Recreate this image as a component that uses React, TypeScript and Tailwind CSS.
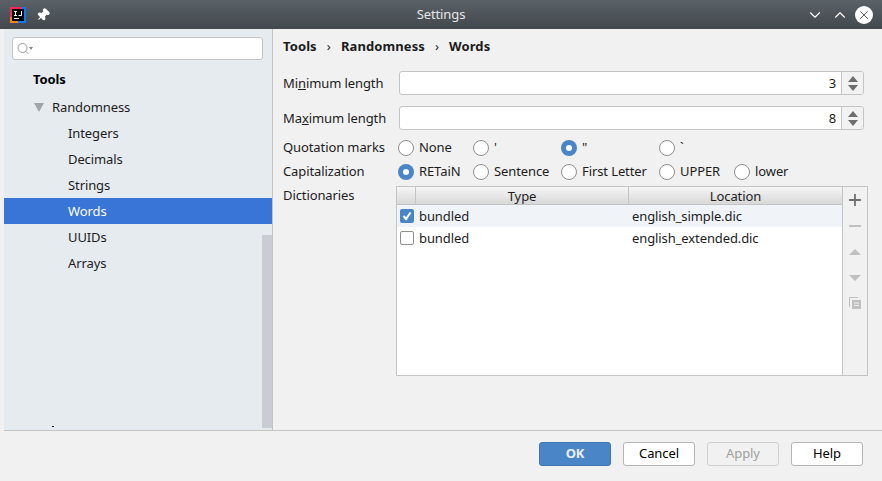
import React from "react";
import { ChevronDown, ChevronUp, X, Pin, Plus, Minus } from "lucide-react";

const Radio = ({ label, checked, width }: { label: string; checked?: boolean; width: string }) => (
  <div className={`flex items-center gap-[5px] ${width}`}>
    {checked ? (
      <span className="flex h-[16px] w-[16px] items-center justify-center rounded-full bg-[#4a86c7]">
        <span className="h-[6px] w-[6px] rounded-full bg-white" />
      </span>
    ) : (
      <span className="h-[16px] w-[16px] rounded-full border border-[#8f8f8f] bg-white" />
    )}
    <span>{label}</span>
  </div>
);

const Spinner = ({ value }: { value: string }) => (
  <div className="flex h-[24px] w-[465px] rounded-[3px] border border-[#c4c4c4] bg-white">
    <div className="flex-1 pr-[5px] text-right leading-[23px]">{value}</div>
    <div className="flex w-[22px] flex-col items-center justify-center gap-[3px] border-l border-[#c4c4c4] bg-[#f2f2f2] rounded-r-[3px]">
      <span className="h-0 w-0 border-x-[5px] border-b-[6px] border-x-transparent border-b-[#6e6e6e]" />
      <span className="h-0 w-0 border-x-[5px] border-t-[6px] border-x-transparent border-t-[#6e6e6e]" />
    </div>
  </div>
);

const Btn = ({ label, className }: { label: string; className: string }) => (
  <div className={`flex h-[24px] w-[72px] items-center justify-center rounded-[3px] border ${className}`}>{label}</div>
);

const TreeRow = ({ label, selected }: { label: string; selected?: boolean }) => (
  <div className={`h-[26px] pl-[64px] leading-[26px] ${selected ? "bg-[#3875d7] text-white" : ""}`}>{label}</div>
);

export default function App() {
  return (
    <div
      className="flex h-[481px] w-[882px] flex-col overflow-hidden bg-[#f1f1f1] text-[13px] tracking-[-0.1px] text-[#1c1c1c]"
      style={{ fontFamily: '"Noto Sans", sans-serif' }}
    >
      {/* Title bar */}
      <div className="flex h-[29px] shrink-0 items-center bg-gradient-to-b from-[#5a6167] to-[#42484d] px-[10px] text-white">
        <svg width="16" height="16" viewBox="0 0 16 16" className="shrink-0">
          <rect width="16" height="16" fill="#087cfa" />
          <path d="M0 0h12v2H2v8H0z" fill="#fe2857" />
          <path d="M0 10h2v4h6v2H0z" fill="#fc801d" />
          <rect x="2" y="2" width="12" height="12" fill="#000" />
          <rect x="4" y="11" width="5" height="1" fill="#fff" />
          <path d="M4 4h3v1H6v3h1v1H4V8h1V5H4zM11 4h1v4.5l-1 .5H8.5V8H11z" fill="#fff" />
        </svg>
        <Pin size={14} className="ml-[10px] rotate-45 fill-white text-white" />
        <div className="flex-1 pl-[26px] text-center text-[13px] text-[#e4e6e8]">Settings</div>
        <ChevronDown size={18} strokeWidth={1.5} className="mr-[6px] text-white" />
        <ChevronUp size={18} strokeWidth={1.5} className="mr-[5px] ml-[1px] text-white" />
        <div className="mr-[-1px] ml-[1px] flex h-[18px] w-[18px] items-center justify-center rounded-full bg-white">
          <X size={14} strokeWidth={1.5} className="text-[#42484d]" />
        </div>
      </div>

      {/* Body */}
      <div className="flex h-[401px] shrink-0 pl-[4px]">
        <aside className="relative w-[268px] shrink-0 bg-[#e6ebf0]">
          <div className="mx-[8px] mt-[8px] flex h-[23px] w-[251px] items-center rounded-[3px] border border-[#c4c4c4] bg-white pl-[4px]">
            <svg width="12" height="14" viewBox="0 0 12 14" fill="none" stroke="#9a9a9a" strokeWidth="1">
              <circle cx="5.5" cy="6" r="4.5" />
              <path d="M8.8 9.3l2.5 2.5" />
            </svg>
            <span className="h-0 w-0 border-x-[2px] border-t-[3px] border-x-transparent border-t-[#8a8a8a]" />
          </div>
          <div className="mt-[6px] h-[26px] pl-[29px] font-bold leading-[26px] text-black">Tools</div>
          <div className="mt-[2px] flex h-[26px] items-center gap-[8px] pl-[30px]">
            <span className="h-0 w-0 border-x-[5px] border-t-[9px] border-x-transparent border-t-[#a3a6a9]" />
            <span className="pt-[2px]">Randomness</span>
          </div>
          <TreeRow label="Integers" />
          <TreeRow label="Decimals" />
          <TreeRow label="Strings" />
          <TreeRow label="Words" selected />
          <TreeRow label="UUIDs" />
          <TreeRow label="Arrays" />
          <div className="absolute right-0 top-[206px] h-[193px] w-[10px] bg-[#c9ccd2]" />
          <div className="absolute left-[48px] top-[397px] h-[1px] w-[2px] bg-black" />
        </aside>

        {/* Content */}
        <main className="flex-1 border-l border-[#c4c4c4] pl-[10px] pr-[14px]">
          <div className="flex h-[33px] items-center gap-[10px] pt-[2px] font-bold tracking-[0.1px] text-[#1c1c1c]">
            <span>Tools</span>
            <span className="font-normal">›</span>
            <span>Randomness</span>
            <span className="font-normal">›</span>
            <span>Words</span>
          </div>
          <div className="mt-[9px] flex items-center">
            <div className="w-[116px] pt-[2px]">
              Mi<span className="underline">n</span>imum length
            </div>
            <Spinner value="3" />
          </div>
          <div className="mt-[11px] flex items-center">
            <div className="w-[116px] pt-[2px]">
              Ma<span className="underline">x</span>imum length
            </div>
            <Spinner value="8" />
          </div>
          <div className="mt-[9px] flex h-[18px] items-center">
            <div className="w-[115px]">Quotation marks</div>
            <Radio label="None" width="w-[75px]" />
            <Radio label="'" width="w-[88px]" />
            <Radio label={'"'} checked width="w-[98px]" />
            <Radio label="`" width="w-[60px]" />
          </div>
          <div className="mt-[6px] flex h-[18px] items-center">
            <div className="w-[115px]">Capitalization</div>
            <Radio label="RETaiN" checked width="w-[75px]" />
            <Radio label="Sentence" width="w-[88px]" />
            <Radio label="First Letter" width="w-[98px]" />
            <Radio label="UPPER" width="w-[75px]" />
            <Radio label="lower" width="w-[60px]" />
          </div>

          <div className="mt-[5px] flex">
            <div className="w-[113px]">Dictionaries</div>
            <div className="flex h-[190px] w-[472px] border border-[#c4c4c4]">
              <div className="flex-1 bg-white">
                <div className="flex h-[18px] border-b border-[#c4c4c4] bg-gradient-to-b from-[#f6f6f6] to-[#d8d8d8] text-center leading-[18px]">
                  <div className="w-[19px] border-r border-[#c4c4c4]" />
                  <div className="w-[213px] border-r border-[#c4c4c4]">Type</div>
                  <div className="flex-1">Location</div>
                </div>
                <div className="flex h-[22px] items-center bg-[#f0f4f9]">
                  <span className="ml-[3px] flex h-[14px] w-[14px] items-center justify-center rounded-[2px] bg-[#4a86c7]">
                    <svg width="10" height="10" viewBox="0 0 10 10" fill="none" stroke="#fff" strokeWidth="2">
                      <path d="M1.5 5l2.5 3 4.5-6.5" />
                    </svg>
                  </span>
                  <span className="ml-[5px] w-[213px] pt-[2px]">bundled</span>
                  <span className="pt-[2px]">english_simple.dic</span>
                </div>
                <div className="flex h-[22px] items-center">
                  <span className="ml-[3px] h-[14px] w-[14px] rounded-[2px] border border-[#8f8f8f] bg-white" />
                  <span className="ml-[5px] w-[213px] pt-[2px]">bundled</span>
                  <span className="pt-[2px]">english_extended.dic</span>
                </div>
              </div>
              <div className="flex w-[25px] shrink-0 flex-col items-center gap-[8px] border-l border-[#c4c4c4] bg-[#f1f1f1] pt-[4px]">
                <Plus size={18} strokeWidth={2.4} className="text-[#6e6e6e]" />
                <Minus size={18} strokeWidth={2.4} className="text-[#c0c0c0]" />
                <span className="mt-[6px] h-0 w-0 border-x-[6px] border-b-[6px] border-x-transparent border-b-[#c0c0c0]" />
                <span className="mt-[12px] h-0 w-0 border-x-[6px] border-t-[6px] border-x-transparent border-t-[#c0c0c0]" />
                <svg width="14" height="14" viewBox="0 0 14 14" className="mt-[7px]" fill="#c0c0c0">
                  <path d="M1 1h9v1H2v9H1z" />
                  <path d="M4 4h9v9H4zM6 6.5v1h5v-1zM6 9v1h5V9z" fillRule="evenodd" />
                </svg>
              </div>
            </div>
          </div>
        </main>
      </div>

      {/* Footer */}
      <div className="ml-[4px] flex flex-1 items-start justify-end gap-[12px] border-t border-[#c4c4c4] pr-[19px] pt-[11px]">
        <Btn label="OK" className="border-[#3f75b0] bg-[#4a86c7] font-bold text-[#e8eef5]" />
        <Btn label="Cancel" className="border-[#b5b5b5] bg-white text-black" />
        <Btn label="Apply" className="border-[#d0d0d0] bg-[#f1f1f1] text-[#a0a0a0]" />
        <Btn label="Help" className="border-[#b5b5b5] bg-white text-black" />
      </div>
    </div>
  );
}
